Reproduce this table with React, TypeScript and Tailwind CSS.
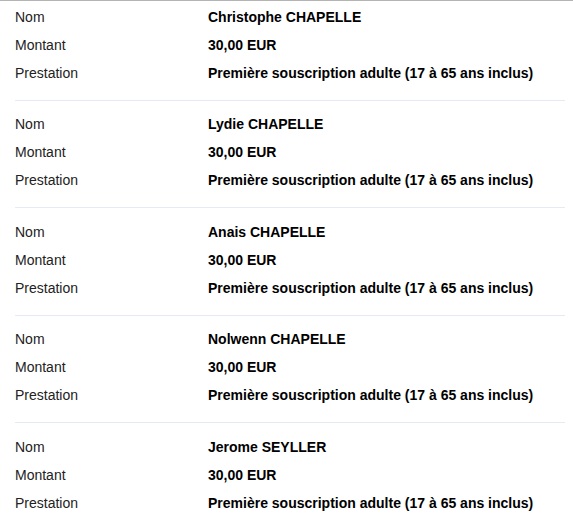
const items = [
  { nom: "Christophe CHAPELLE" },
  { nom: "Lydie CHAPELLE" },
  { nom: "Anais CHAPELLE" },
  { nom: "Nolwenn CHAPELLE" },
  { nom: "Jerome SEYLLER" },
];

function Row({ label, value }: { label: string; value: string }) {
  return (
    <div className="flex h-[28px] items-center">
      <div className="w-[193px] shrink-0 text-[#222]">{label}</div>
      <div className="font-bold text-black">{value}</div>
    </div>
  );
}

export default function App() {
  return (
    <div
      className="min-h-screen border-t border-[#b4b4b4] bg-white pl-[15px] pr-[8px] text-[14px]"
      style={{ fontFamily: '"Liberation Sans", Arial, sans-serif' }}
    >
      {items.map((it, i) => (
        <div
          key={i}
          className={`border-b border-[#e6ebf3] pb-[12.5px] ${i === 0 ? "pt-[2px]" : "pt-[10px]"}`}
        >
          <Row label="Nom" value={it.nom} />
          <Row label="Montant" value="30,00 EUR" />
          <Row label="Prestation" value="Première souscription adulte (17 à 65 ans inclus)" />
        </div>
      ))}
    </div>
  );
}
